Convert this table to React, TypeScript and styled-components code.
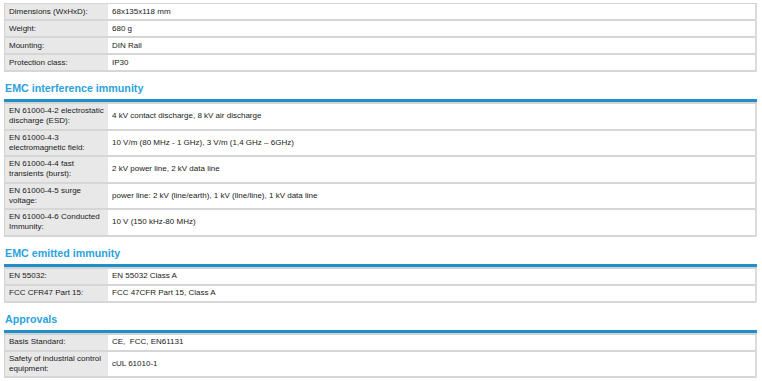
import React from "react";
import styled, { createGlobalStyle } from "styled-components";

interface SpecRow {
  label: string;
  value: string;
  tall?: boolean;
}

interface SpecSection {
  title?: string;
  rows: SpecRow[];
}

const sections: SpecSection[] = [
  {
    rows: [
      { label: "Dimensions (WxHxD):", value: "68x135x118 mm" },
      { label: "Weight:", value: "680 g" },
      { label: "Mounting:", value: "DIN Rail" },
      { label: "Protection class:", value: "IP30" },
    ],
  },
  {
    title: "EMC interference immunity",
    rows: [
      {
        label: "EN 61000-4-2 electrostatic discharge (ESD):",
        value: "4 kV contact discharge, 8 kV air discharge",
        tall: true,
      },
      {
        label: "EN 61000-4-3 electromagnetic field:",
        value: "10 V/m (80 MHz - 1 GHz), 3 V/m (1,4 GHz – 6GHz)",
        tall: true,
      },
      {
        label: "EN 61000-4-4 fast transients (burst):",
        value: "2 kV power line, 2 kV data line",
        tall: true,
      },
      {
        label: "EN 61000-4-5 surge voltage:",
        value: "power line: 2 kV (line/earth), 1 kV (line/line), 1 kV data line",
        tall: true,
      },
      {
        label: "EN 61000-4-6 Conducted Immunity:",
        value: "10 V (150 kHz-80 MHz)",
        tall: true,
      },
    ],
  },
  {
    title: "EMC emitted immunity",
    rows: [
      { label: "EN 55032:", value: "EN 55032 Class A" },
      { label: "FCC CFR47 Part 15:", value: "FCC 47CFR Part 15, Class A" },
    ],
  },
  {
    title: "Approvals",
    rows: [
      { label: "Basis Standard:", value: "CE,  FCC, EN61131" },
      {
        label: "Safety of industrial control equipment:",
        value: "cUL 61010-1",
        tall: true,
      },
    ],
  },
];

export default function App() {
  return (
    <>
      <GlobalStyle />
      <Page>
        {sections.map((section, i) => (
          <section key={i}>
            {section.title ? (
              <>
                <Heading>{section.title}</Heading>
                <BlueBar />
              </>
            ) : (
              <TopRule />
            )}
            <Table>
              {section.rows.map((row) => (
                <Row key={row.label} $tall={row.tall}>
                  <Label>{row.label}</Label>
                  <Value>{row.value}</Value>
                </Row>
              ))}
            </Table>
          </section>
        ))}
      </Page>
    </>
  );
}

const GlobalStyle = createGlobalStyle`
  body {
    margin: 0;
    background: #ffffff;
    font-family: "Liberation Sans", Arial, sans-serif;
    color: #1a1a1a;
  }
`;

const Page = styled.div`
  width: 753px;
  padding: 3px 0 0 4px;
`;

const Heading = styled.h2`
  margin: 0;
  padding: 9px 0 4px 1px;
  height: 14px;
  line-height: 14px;
  font-size: 10.7px;
  font-weight: bold;
  color: #2ba3dc;
`;

const BlueBar = styled.div`
  height: 3px;
  background: #1f8fca;
  border-bottom: 2px solid #d2d2d2;
`;

const TopRule = styled.div`
  height: 1px;
  background: #d6d6d6;
`;

const Table = styled.div`
  display: flex;
  flex-direction: column;
  border-left: 1px solid #d3d3d3;
  border-right: 2px solid #dcdcdc;
`;

const Row = styled.div<{ $tall?: boolean }>`
  display: flex;
  height: ${(p) => (p.$tall ? "24.5px" : "15px")};
  border-bottom: 2px solid #d6d6d6;
  font-size: 8px;
  line-height: 10px;
  white-space: pre-wrap;
`;

const Label = styled.div`
  width: 99px;
  flex-shrink: 0;
  padding: 0 0 0 4px;
  background: #e8e8e8;
  display: flex;
  align-items: center;
  color: #1a1a1a;
`;

const Value = styled.div`
  flex: 1;
  padding-left: 4px;
  display: flex;
  align-items: center;
  background: #ffffff;
  color: #1a1a1a;
`;
